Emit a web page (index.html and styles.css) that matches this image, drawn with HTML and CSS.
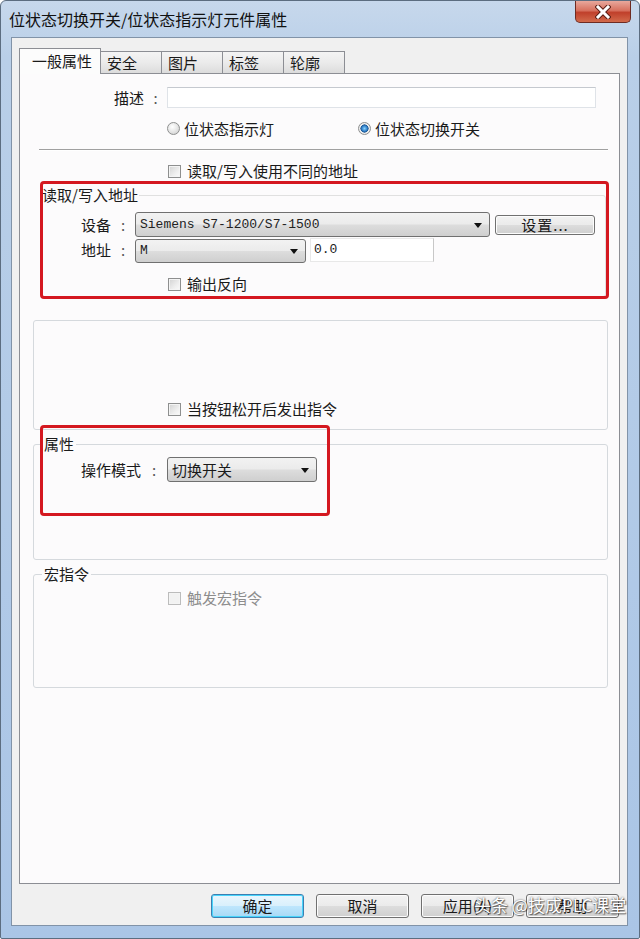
FILE: index.html
```html
<!DOCTYPE html>
<html lang="zh-CN">
    <head>
        <meta charset="UTF-8">
        <meta name="viewport" content="width=device-width, initial-scale=1.0">
        <title>位状态切换开关/位状态指示灯元件属性</title>
        <link rel="stylesheet" href="styles.css">
    </head>
    <body>
        <div class="window">
            <!-- Barra de titulo -->
            <div class="titlebar">
                <span class="title">位状态切换开关/位状态指示灯元件属性</span>
                <span class="close">
                    <svg width="16" height="14" viewBox="0 0 16 14">
                        <path d="M3 2 L13 12 M13 2 L3 12" stroke="#5a1d14" stroke-width="5" stroke-linecap="square"/>
                        <path d="M3 2 L13 12 M13 2 L3 12" stroke="#ffffff" stroke-width="3" stroke-linecap="square"/>
                    </svg>
                </span>
            </div>

            <div class="client">
                <div class="tabs">
                    <span class="tab active">一般属性</span>
                    <span class="tab">安全</span>
                    <span class="tab">图片</span>
                    <span class="tab">标签</span>
                    <span class="tab">轮廓</span>
                </div>

                <div class="panel">
                    <div class="row row-desc">
                        <span class="lbl">描述</span>
                        <span class="colon">:</span>
                        <span class="textbox desc-box"></span>
                    </div>

                    <div class="row row-radio">
                        <span class="radio-item first">
                            <span class="radio"></span>位状态指示灯
                        </span>
                        <span class="radio-item">
                            <span class="radio checked"></span>位状态切换开关
                        </span>
                    </div>

                    <div class="sep"></div>

                    <div class="check-row top-check">
                        <span class="checkbox"></span>读取/写入使用不同的地址
                    </div>

                    <!-- Grupo de direccion -->
                    <fieldset class="group group-addr">
                        <legend>读取/写入地址</legend>
                        <div class="row row-device">
                            <span class="lbl">设备</span>
                            <span class="colon">:</span>
                            <span class="combo device-combo"><span class="mono">Siemens S7-1200/S7-1500</span><span class="arrow"></span></span>
                            <span class="btn small-btn">设置...</span>
                        </div>
                        <div class="row row-address">
                            <span class="lbl">地址</span>
                            <span class="colon">:</span>
                            <span class="combo addr-combo"><span class="mono">M</span><span class="arrow"></span></span>
                            <span class="textbox addr-box"><span class="mono">0.0</span></span>
                        </div>
                        <div class="check-row addr-check">
                            <span class="checkbox"></span>输出反向
                        </div>
                    </fieldset>

                    <fieldset class="group group-blank">
                        <div class="check-row">
                            <span class="checkbox"></span>当按钮松开后发出指令
                        </div>
                    </fieldset>

                    <fieldset class="group group-attr">
                        <legend>属性</legend>
                        <div class="row row-mode">
                            <span class="lbl">操作模式</span>
                            <span class="colon">:</span>
                            <span class="combo mode-combo">切换开关<span class="arrow"></span></span>
                        </div>
                    </fieldset>

                    <fieldset class="group group-macro">
                        <legend>宏指令</legend>
                        <div class="check-row disabled">
                            <span class="checkbox"></span>触发宏指令
                        </div>
                    </fieldset>

                    <!-- Marcas rojas encima del contenido -->
                    <div class="mark mark-addr"></div>
                    <div class="mark mark-attr"></div>
                </div>

                <div class="buttons">
                    <span class="btn default">确定</span>
                    <span class="btn">取消</span>
                    <span class="btn">应用(A)</span>
                    <span class="btn">帮助</span>
                </div>
            </div>

            <div class="watermark">头条 @技成PLC课堂</div>
        </div>
    </body>
</html>
```

FILE: styles.css
```css
/* Ventana de propiedades estilo Windows 7 */
body {
    margin: 0;
    font-family: "Noto Sans CJK SC", "Noto Sans", sans-serif;
    font-size: 15px;
    line-height: 18px;
    color: #1a1a1a;
    background-color: #ffffff;
}
.window {
    position: relative;
    width: 640px;
    height: 939px;
    box-sizing: border-box;
    padding: 0 11px 12px 10px;
    display: flex;
    flex-direction: column;
    background: linear-gradient(to bottom, #c7d8ec 0%, #b9cfe8 6%, #aac5e6 100%);
    border: 1px solid #5c6d80;
    border-radius: 6px 6px 2px 2px;
}
.titlebar {
    height: 36px;
    display: flex;
    justify-content: space-between;
    align-items: flex-start;
}
.title {
    margin-top: 9px;
    margin-left: -2px;
    font-size: 16px;
    color: #111;
}
.close {
    width: 56px;
    height: 22px;
    margin-right: -3px;
    display: flex;
    align-items: center;
    justify-content: center;
    box-sizing: border-box;
    border: 1px solid #6e2b22;
    border-top: none;
    border-radius: 0 0 5px 5px;
    background: linear-gradient(to bottom, #e8a89c 0%, #d7715f 45%, #c0402b 55%, #d26a4c 100%);
}
.client {
    flex: 1;
    display: flex;
    flex-direction: column;
    background-color: #f0f0f0;
    border: 1px solid #8193a8;
    padding-top: 10px;
}
.tabs {
    display: flex;
    align-items: flex-end;
    margin-left: 7px;
    height: 25px;
    position: relative;
    z-index: 1;
}
.tab {
    width: 61px;
    height: 22px;
    box-sizing: border-box;
    padding-left: 6px;
    line-height: 22px;
    border: 1px solid #8c8e94;
    border-bottom: none;
    border-left: none;
    background: linear-gradient(to bottom, #f4f4f4 0%, #ebebeb 50%, #dcdcdc 100%);
}
.tab.active {
    width: 82px;
    height: 26px;
    margin-bottom: -1px;
    padding-left: 12px;
    line-height: 24px;
    border-left: 1px solid #8c8e94;
    background: #fcfcfc;
}
.panel {
    position: relative;
    margin-left: 7px;
    width: 601px;
    height: 811px;
    box-sizing: border-box;
    border: 1px solid #8c8e94;
    background-color: #fcfbfc;
    padding-top: 13px;
    display: flex;
    flex-direction: column;
}
.row {
    display: flex;
    align-items: center;
}
.lbl {
    white-space: nowrap;
}
.colon {
    text-align: center;
    color: #555;
}
.row-desc {
    height: 21px;
}
.row-desc .lbl {
    margin-left: 94px;
}
.row-desc .colon {
    width: 23px;
}
.textbox {
    box-sizing: border-box;
    border: 1px solid #dfe3e8;
    border-top-color: #c5c9cf;
    background-color: #ffffff;
    display: flex;
    align-items: center;
}
.desc-box {
    width: 429px;
    height: 21px;
}
.row-radio {
    margin-top: 11px;
    height: 19px;
}
.radio-item {
    display: flex;
    align-items: center;
    gap: 4px;
}
.radio-item.first {
    margin-left: 147px;
    width: 191px;
}
.radio {
    width: 13px;
    height: 13px;
    box-sizing: border-box;
    border-radius: 50%;
    border: 1px solid #8e8f8f;
    background: radial-gradient(circle at 40% 35%, #ffffff 0%, #e6e6e6 50%, #c8c8c8 100%);
}
.radio.checked {
    background: radial-gradient(circle at 50% 50%, #8ad3ff 0%, #2f7fc8 35%, #1b4f8a 50%, #f2f2f2 55%, #d8d8d8 100%);
}
.sep {
    margin-top: 11px;
    margin-left: 19px;
    width: 569px;
    border-top: 1px solid #a0a0a0;
    border-bottom: 1px solid #ffffff;
}
.check-row {
    display: flex;
    align-items: center;
    gap: 6px;
    height: 18px;
}
.checkbox {
    width: 13px;
    height: 13px;
    box-sizing: border-box;
    border: 1px solid #8e8f8f;
    background: linear-gradient(135deg, #d2d2d2 0%, #eeeeee 60%, #fbfbfb 100%);
    box-shadow: inset 0 0 0 1px #f4f4f4;
}
.check-row.disabled {
    color: #8d8d8d;
}
.check-row.disabled .checkbox {
    border-color: #bcbcbc;
    background: #f2f2f2;
}
.top-check {
    margin-top: 11px;
    margin-left: 148px;
}
.group {
    box-sizing: border-box;
    margin: 0;
    padding: 0;
    min-width: 0;
    border: 1px solid #d5d9dd;
    border-radius: 3px;
}
.group legend {
    padding: 0 2px;
    line-height: 18px;
}
.group-addr {
    margin-top: 6px;
    margin-left: 21px;
    width: 565px;
    height: 111px;
    border-color: #e0e0e0;
}
.group-addr legend {
    margin-left: -1px;
    padding: 0 1px;
}
.row-device {
    margin-top: 8px;
    height: 25px;
}
.row-device .lbl, .row-address .lbl {
    margin-left: 39px;
}
.row-device .colon, .row-address .colon {
    width: 24px;
}
.combo {
    position: relative;
    box-sizing: border-box;
    display: flex;
    align-items: center;
    padding-left: 4px;
    border: 1px solid #707070;
    border-radius: 3px;
    background: linear-gradient(to bottom, #f2f2f2 0%, #ebebeb 49%, #dddddd 51%, #cfcfcf 100%);
}
.arrow {
    position: absolute;
    right: 7px;
    top: 50%;
    margin-top: -2px;
    border-left: 4px solid transparent;
    border-right: 4px solid transparent;
    border-top: 5px solid #111;
}
.mono {
    font-family: "Liberation Mono", monospace;
    font-size: 13px;
    color: #222;
}
.device-combo {
    width: 355px;
    height: 25px;
}
.small-btn {
    margin-left: 5px;
    width: 100px;
    height: 20px;
    letter-spacing: 1px;
}
.row-address {
    height: 26px;
}
.addr-combo {
    width: 171px;
    height: 24px;
    margin-top: 2px;
}
.addr-box {
    margin-left: 4px;
    width: 124px;
    height: 24px;
    padding-left: 3px;
    border-color: #e8e8e8;
    border-right-color: #c8c8c8;
}
.addr-check {
    margin-top: 12px;
    margin-left: 126px;
}
.group-blank, .group-attr, .group-macro {
    margin-left: 13px;
    width: 575px;
}
.group-blank {
    margin-top: 23px;
    height: 110px;
    padding-top: 79px;
}
.group-blank .check-row {
    margin-left: 134px;
}
.group-attr {
    margin-top: 5px;
    height: 125px;
}
.group-attr legend, .group-macro legend {
    margin-left: 8px;
}
.row-mode {
    margin-top: 4px;
    height: 25px;
}
.row-mode .lbl {
    margin-left: 47px;
}
.row-mode .colon {
    width: 26px;
}
.mode-combo {
    width: 150px;
    height: 25px;
}
.group-macro {
    margin-top: 5px;
    height: 123px;
}
.group-macro .check-row {
    margin-top: 6px;
    margin-left: 134px;
}
.mark {
    position: absolute;
    box-sizing: border-box;
    border: 3px solid #d41820;
    border-radius: 4px;
}
.mark-addr {
    left: 20px;
    top: 107px;
    width: 569px;
    height: 118px;
}
.mark-attr {
    left: 20px;
    top: 351px;
    width: 290px;
    height: 91px;
}
.buttons {
    display: flex;
    justify-content: flex-end;
    gap: 12px;
    margin-top: 10px;
    padding-right: 8px;
}
.btn {
    box-sizing: border-box;
    display: flex;
    align-items: center;
    justify-content: center;
    border: 1px solid #707070;
    border-radius: 3px;
    background: linear-gradient(to bottom, #f2f2f2 0%, #ebebeb 49%, #dddddd 51%, #cfcfcf 100%);
    box-shadow: inset 0 0 0 1px #fcfcfc;
}
.buttons .btn {
    width: 93px;
    height: 24px;
}
.btn.default {
    border-color: #3c7fb1;
    box-shadow: inset 0 0 0 1px #48d4fb;
    background: linear-gradient(to bottom, #eaf6fd 0%, #d9f0fc 49%, #bee6fd 51%, #a7d9f5 100%);
}
.watermark {
    position: absolute;
    left: 473px;
    top: 895px;
    font-size: 17px;
    color: #ffffff;
    text-shadow: 0 0 2px rgba(0, 0, 0, 0.7), 1px 1px 1px rgba(0, 0, 0, 0.5);
}
```
